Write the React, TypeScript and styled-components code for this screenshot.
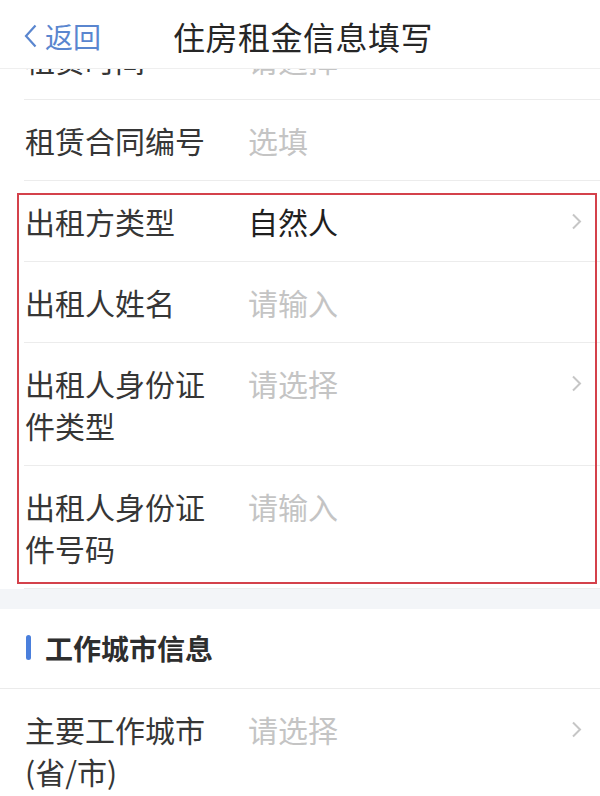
import React from "react";
import styled, { createGlobalStyle } from "styled-components";

const Global = createGlobalStyle`
  html, body { margin: 0; padding: 0; background: #fff; }
  body { font-family: "Noto Sans CJK SC", "Noto Sans", sans-serif; }
  * { box-sizing: border-box; }
`;

const Page = styled.div`
  width: 600px;
  height: 796px;
  display: flex;
  flex-direction: column;
  overflow: hidden;
  background: #fff;
`;

const Header = styled.header`
  position: relative;
  z-index: 2;
  height: 69px;
  flex: none;
  display: flex;
  align-items: center;
  background: #fff;
  border-bottom: 1px solid #efefef;
  padding-left: 24px;
  padding-top: 3px;
`;

const Back = styled.div`
  display: flex;
  align-items: center;
  gap: 8px;
  color: #5a86cf;
  font-size: 28px;
  width: 149px;
  line-height: 1;
`;

const Title = styled.h1`
  margin: 0;
  font-size: 32px;
  font-weight: 400;
  color: #262626;
  letter-spacing: 0.5px;
`;

const Content = styled.main`
  flex: 1;
  overflow: hidden;
`;

const List = styled.div<{ $offset?: number }>`
  margin-top: ${(p) => p.$offset ?? 0}px;
  display: flex;
  flex-direction: column;
`;

const Row = styled.div`
  display: flex;
  align-items: flex-start;
  padding: 19px 18px 20px 25px;
  position: relative;
  &::after {
    content: "";
    position: absolute;
    left: 24px;
    right: 0;
    bottom: 0;
    height: 1px;
    background: #ececec;
  }
`;

const Label = styled.div`
  width: 190px;
  flex: none;
  font-size: 30px;
  line-height: 42px;
  color: #363636;
  margin-right: 33px;
`;

const Value = styled.div<{ $placeholder?: boolean }>`
  flex: 1;
  font-size: 30px;
  line-height: 42px;
  color: ${(p) => (p.$placeholder ? "#c4c4c4" : "#1f1f1f")};
`;

const Chevron = styled.svg`
  flex: none;
  margin-top: 13px;
  width: 11px;
  height: 17px;
`;

const Group = styled.div`
  position: relative;
`;

const Annotation = styled.div`
  position: absolute;
  top: 12px;
  left: 17px;
  right: 3px;
  bottom: 5px;
  border: 2px solid #d4414b;
  pointer-events: none;
`;

const Spacer = styled.div`
  height: 20px;
  background: #f3f5f8;
`;

const SectionHead = styled.div`
  height: 80px;
  display: flex;
  align-items: center;
  gap: 14px;
  padding-left: 26px;
  padding-bottom: 2px;
  border-bottom: 1px solid #ebebeb;
  font-size: 28px;
  font-weight: 700;
  color: #2e2e2e;
  &::before {
    content: "";
    width: 5px;
    height: 25px;
    border-radius: 3px;
    background: #4a7fdc;
  }
`;

const ChevronIcon = () => (
  <Chevron viewBox="0 0 11 17">
    <polyline points="2,1.5 9,8.5 2,15.5" fill="none" stroke="#c6c6c6" strokeWidth="2" />
  </Chevron>
);

type Item = { label: string; value: string; placeholder?: boolean; arrow?: boolean };

const FormRow = ({ label, value, placeholder, arrow }: Item) => (
  <Row>
    <Label>{label}</Label>
    <Value $placeholder={placeholder}>{value}</Value>
    {arrow && <ChevronIcon />}
  </Row>
);

const boxed: Item[] = [
  { label: "出租方类型", value: "自然人", arrow: true },
  { label: "出租人姓名", value: "请输入", placeholder: true },
  { label: "出租人身份证件类型", value: "请选择", placeholder: true, arrow: true },
  { label: "出租人身份证件号码", value: "请输入", placeholder: true },
];

export default function App() {
  return (
    <>
      <Global />
      <Page>
        <Header>
          <Back>
            <svg width="13" height="24" viewBox="0 0 13 24">
              <polyline points="11.5,1.5 2,12 11.5,22.5" fill="none" stroke="#5a86cf" strokeWidth="2.2" />
            </svg>
            返回
          </Back>
          <Title>住房租金信息填写</Title>
        </Header>
        <Content>
          <List $offset={-50}>
            <FormRow label="租赁时间" value="请选择" placeholder arrow />
            <FormRow label="租赁合同编号" value="选填" placeholder />
            <Group>
              {boxed.map((it) => (
                <FormRow key={it.label} {...it} />
              ))}
              <Annotation />
            </Group>
            <Spacer />
            <SectionHead>工作城市信息</SectionHead>
            <FormRow label="主要工作城市(省/市)" value="请选择" placeholder arrow />
          </List>
        </Content>
      </Page>
    </>
  );
}
